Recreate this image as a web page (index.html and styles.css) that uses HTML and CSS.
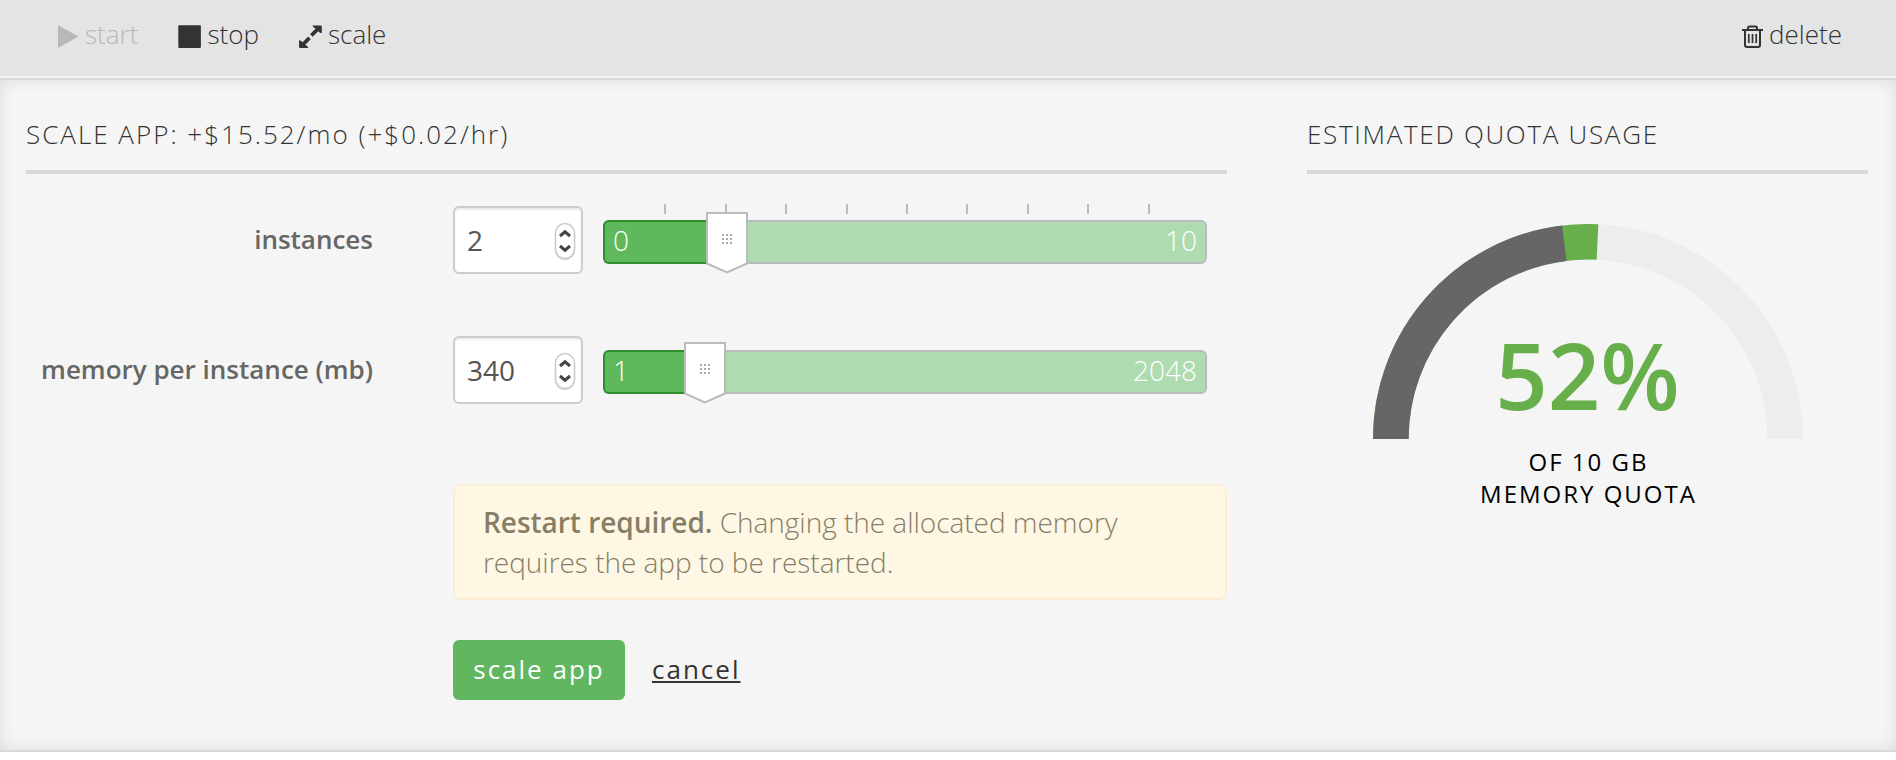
FILE: index.html
```html
<!DOCTYPE html>
<html lang="en">
<head>
<meta charset="utf-8">
<title>Scale app</title>
<link rel="stylesheet" href="styles.css">
</head>
<body>
<header class="toolbar">
  <nav class="actions">
    <a class="action action-start disabled"><svg class="icon" width="21" height="24" viewBox="0 0 21 24"><path d="M0 1.300 20.500 12.600 0 24z" fill="currentColor"/></svg><span>start</span></a>
    <a class="action action-stop"><svg class="icon" width="23" height="24" viewBox="0 0 23 24"><rect x="0.3" y="1.200" width="22.6" height="22.8" rx="1" fill="currentColor"/></svg><span>stop</span></a>
    <a class="action action-scale"><svg class="icon" width="23" height="24" viewBox="0 0 23 24"><g fill="currentColor"><path d="M13.500 1.400H22l.8.8V9h-1.600l-1.900-1.800-5.600 5.600-2.700-2.600 5.600-5.600-2.200-1.400z"/><path d="M9.300 24H.8l-.8-.8v-6.800h1.600l1.900 1.800 5.600-5.600 2.700 2.600-5.600 5.600 2.200 1.400z"/></g></svg><span>scale</span></a>
  </nav>
  <a class="action action-delete"><svg class="icon" width="21" height="24" viewBox="0 0 21 24"><g fill="none" stroke="currentColor" stroke-width="2"><path d="M0 6h21M6 5.500V4Q6 2.500 7.500 2.500h6Q15 2.500 15 4V5.500"/><path d="M3 6v15q0 2 2 2h11q2 0 2-2V6"/><path d="M6.800 10v9M10.500 10v9M14.200 10v9" stroke-width="1.700"/></g></svg><span>delete</span></a>
</header>

<main class="panel">
  <section class="scale">
    <h2 class="heading">SCALE APP: +$15.52/mo (+$0.02/hr)</h2>
    <div class="field">
      <label class="label">instances</label>
      <div class="number"><span>2</span><svg class="stepper" width="24" height="42" viewBox="0 0 24 42"><rect x="2.500" y="5.500" width="19" height="35" rx="9.500" class="stepper-shadow"/><rect x="2.500" y="4.500" width="19" height="35" rx="9.500" class="stepper-body"/><path class="stepper-arrow" d="M7 17 12 12.800l5 4.200M7 27 12 31.200l5-4.200"/></svg></div>
      <div class="slider">
        <div class="ticks"><i></i><i></i><i></i><i></i><i></i><i></i><i></i><i></i><i></i></div>
        <div class="fill" style="width:19.9%">0</div>
        <span class="max">10</span>
        <svg class="handle" style="left:101px" width="42" height="62" viewBox="0 0 42 62"><path class="handle-body" d="M1 1h40v50.500L21 60.500 1 51.500z"/><path class="handle-grip" d="M16 23h2m2 0h2m2 0h2M16 27h2m2 0h2m2 0h2M16 31h2m2 0h2m2 0h2"/></svg>
      </div>
    </div>
    <div class="field">
      <label class="label">memory per instance (mb)</label>
      <div class="number"><span>340</span><svg class="stepper" width="24" height="42" viewBox="0 0 24 42"><rect x="2.500" y="5.500" width="19" height="35" rx="9.500" class="stepper-shadow"/><rect x="2.500" y="4.500" width="19" height="35" rx="9.500" class="stepper-body"/><path class="stepper-arrow" d="M7 17 12 12.800l5 4.200M7 27 12 31.200l5-4.200"/></svg></div>
      <div class="slider">
        <div class="fill" style="width:16.56%">1</div>
        <span class="max">2048</span>
        <svg class="handle" style="left:79px" width="42" height="62" viewBox="0 0 42 62"><path class="handle-body" d="M1 1h40v50.500L21 60.500 1 51.500z"/><path class="handle-grip" d="M16 23h2m2 0h2m2 0h2M16 27h2m2 0h2m2 0h2M16 31h2m2 0h2m2 0h2"/></svg>
      </div>
    </div>
    <p class="notice"><strong>Restart required.</strong> Changing the allocated memory<br>requires the app to be restarted.</p>
    <div class="buttons"><button class="submit">scale app</button><a class="cancel">cancel</a></div>
  </section>

  <section class="quota">
    <h2 class="heading">ESTIMATED QUOTA USAGE</h2>
    <svg class="gauge" width="430" height="215" viewBox="0 0 430 215">
      <g fill="none" stroke-width="35.6">
        <path d="M17.800 215A197.200 197.200 0 0 1 412.200 215" stroke="#ededed"/>
        <path d="M17.800 215A197.200 197.200 0 0 1 224.500 18.030" stroke="#67af4b"/>
        <path d="M17.800 215A197.200 197.200 0 0 1 191.300 19.230" stroke="#666"/>
      </g>
    </svg>
    <div class="percent">52%</div>
    <div class="caption">OF 10 GB<br>MEMORY QUOTA</div>
  </section>
</main>
</body>
</html>
```

FILE: styles.css
```css
* { box-sizing: border-box; }
body { margin: 0; background: #fff; color: #333; font-family: "Open Sans", sans-serif; font-weight: 300; font-size: 28px; }

.toolbar { display: flex; justify-content: space-between; height: 80px; padding: 0 54px 0 58px; background: #e4e4e4; border-bottom: 2px solid #d8d8d8; box-shadow: inset 0 -2px #f2f2f2; }
.actions { display: flex; gap: 40px; }
.action { display: flex; align-items: flex-start; gap: 6px; height: 72px; font-size: 26px; line-height: 69px; }
.action .icon { margin-top: 24px; }
.disabled { color: #b8b8b8; }

.panel { display: flex; justify-content: space-between; height: 672px; padding: 30px 28px 0 26px; background: #f5f5f5; border-bottom: 2px solid #d8d8d8; box-shadow: inset 0 0 16px rgba(0, 0, 0, .1); }
.scale { width: 1201px; }
.quota { width: 561px; display: flex; flex-direction: column; align-items: center; }
.heading { align-self: stretch; height: 64px; margin: 0; border-bottom: 4px solid #d8d8d8; font-size: 26px; font-weight: 300; line-height: 48px; letter-spacing: 2px; white-space: nowrap; }
.quota .heading { letter-spacing: 1.7px; }

.field { display: flex; align-items: center; height: 68px; margin-top: 32px; }
.field + .field { margin-top: 62px; }
.label { width: 347px; margin-right: 80px; padding-bottom: 3px; color: #666; font-size: 26px; font-weight: 600; line-height: 40px; text-align: right; white-space: nowrap; }
.number { display: flex; align-items: center; justify-content: space-between; width: 130px; height: 68px; padding: 0 4px 0 12px; background: #fff; border: 2px solid #ccc; border-radius: 6px; box-shadow: inset 0 2px 2px rgba(0, 0, 0, .075); color: #555; font-weight: 400; }
.stepper-shadow { fill: #ddd; stroke: #ddd; stroke-width: 1.5; }
.stepper-body { fill: #fff; stroke: #ccc; stroke-width: 1.5; }
.stepper-arrow { fill: none; stroke: #444; stroke-width: 3; }
.slider { position: relative; display: flex; align-items: center; justify-content: space-between; width: 604px; height: 44px; margin: 4px 0 0 20px; border: 2px solid #bbb; border-radius: 6px; background: #aedbb0; color: #fff; line-height: 36px; }
.fill { height: 44px; margin: -2px; padding: 0 8px; background: #5fb85b; border: 2px solid #2f8f2f; border-right: 0; border-radius: 6px 0 0 6px; }
.max { padding: 0 8px 4px 0; }
.ticks { position: absolute; left: 1px; top: -18px; display: flex; justify-content: space-evenly; width: 602px; height: 10px; }
.ticks i { width: 2px; background: #bbb; }
.handle { position: absolute; top: -10px; }
.handle-body { fill: #fff; stroke: #bbb; stroke-width: 2; }
.handle-grip { stroke: #aaa; stroke-width: 2; }

.notice { width: 774px; height: 116px; margin: 80px 0 0 427px; padding: 16px 28px; background: #fef7e4; border: 2px solid #fbeed5; border-radius: 8px; color: #877e63; line-height: 40px; letter-spacing: -.03px; text-shadow: 0 1px 0 rgba(255, 255, 255, .5); }
.notice strong { font-weight: 600; }
.buttons { display: flex; align-items: center; gap: 27px; margin: 40px 0 0 427px; }
.submit { width: 172px; height: 60px; padding: 0 0 3px; border: 0; border-radius: 6px; background: #60b760; color: #fff; font: 400 26px/56px "Open Sans", sans-serif; letter-spacing: 2px; }
.cancel { padding-bottom: 3px; font-size: 26px; font-weight: 400; letter-spacing: 2px; text-decoration: underline; }

.gauge { margin: 50px 0 0 1px; }
.percent { height: 92px; margin-top: -110px; color: #67af4b; font-size: 92px; font-weight: 600; line-height: 92px; }
.caption { margin-top: 25px; padding-left: 2px; color: #000; font-size: 24px; font-weight: 400; line-height: 32px; letter-spacing: 2px; text-align: center; }
```
